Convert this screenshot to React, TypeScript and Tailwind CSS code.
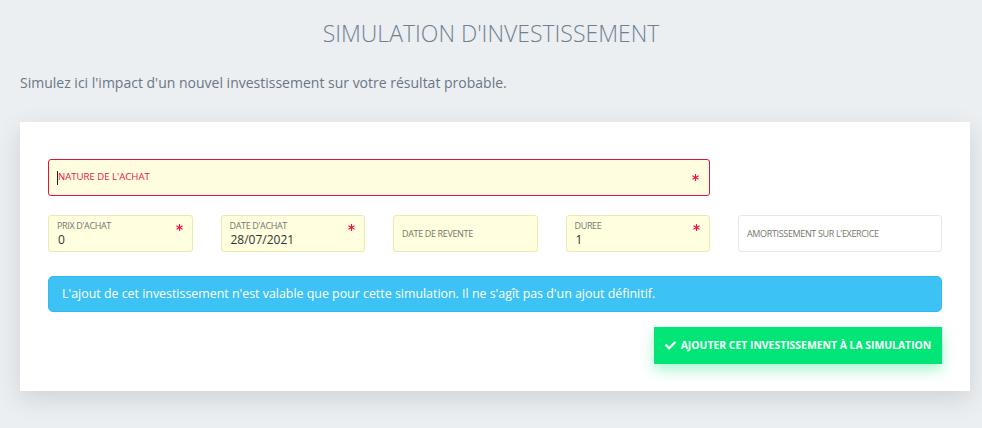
import React from 'react';
import { FaCheck, FaAsterisk } from 'react-icons/fa';

const font = { fontFamily: '"Open Sans", Lato, sans-serif' };

type FieldProps = {
  label: string;
  value?: string;
  required?: boolean;
  readOnly?: boolean;
};

const Star = ({ className }: { className: string }) => (
  <FaAsterisk className={`absolute w-[7px] h-[7px] text-[#f0124a] ${className}`} />
);

const Field: React.FC<FieldProps> = ({ label, value, required, readOnly }) => (
  <div
    className={`relative h-[37px] rounded-[3px] border px-[8px] flex flex-col justify-center ${
      readOnly ? 'bg-white border-[#e3e8ec]' : 'bg-[#fffedf] border-[#eee9ae]'
    }`}
  >
    <span className="text-[9px] tracking-[-0.35px] uppercase leading-[12px] text-[#77766a]">{label}</span>
    {value !== undefined && (
      <span className="text-[12px] leading-[15px] text-[#333] pl-[1px]">{value}</span>
    )}
    {required && <Star className="right-[9px] top-[8px]" />}
  </div>
);

export default function App() {
  return (
    <div className="min-h-[428px] w-full bg-[#eceff2] pt-[18px] pb-[36px]" style={font}>
      <h1 className="text-center text-[23px] font-light text-[#6f8190] leading-[30px]">
        SIMULATION D'INVESTISSEMENT
      </h1>
      <p className="mt-[26px] px-[20px] text-[14px] text-[#6b7683] leading-[18px]">
        Simulez ici l'impact d'un nouvel investissement sur votre résultat probable.
      </p>

      <div className="ml-[20px] mr-[12px] mt-[30px] bg-white px-[28px] pt-[37px] pb-[27px] shadow-[0_8px_24px_rgba(0,0,0,0.12)]">
        <div className="relative w-[662px] h-[37px] rounded-[3px] border border-[#e0123f] bg-[#fffde0] flex items-center px-[8px]">
          <span className="w-px h-[14px] bg-[#222]" />
          <span className="text-[9.6px] uppercase text-[#e8143f]">Nature de l'achat</span>
          <Star className="right-[10px] top-[14px]" />
        </div>

        <div className="mt-[19px] grid grid-cols-[repeat(4,144.5px)_1fr] gap-x-[28px]">
          <Field label="Prix d'achat" value="0" required />
          <Field label="Date d'achat" value="28/07/2021" required />
          <Field label="Date de revente" />
          <Field label="Duree" value="1" required />
          <Field label="Amortissement sur l'exercice" readOnly />
        </div>

        <div className="mt-[24px] h-[36px] rounded-[5px] border border-[#33b8f0] bg-[#3dc2f6] flex items-center px-[13px] text-[12.4px] text-white">
          L'ajout de cet investissement n'est valable que pour cette simulation. Il ne s'agît pas d'un ajout définitif.
        </div>

        <div className="mt-[15px] flex justify-end">
          <button className="h-[37px] w-[288px] bg-[#02e577] flex items-center justify-center gap-[5px] text-white text-[10.4px] font-bold uppercase shadow-[0_6px_14px_rgba(2,229,119,0.35)]">
            <FaCheck className="w-[11px] h-[11px]" />
            Ajouter cet investissement à la simulation
          </button>
        </div>
      </div>
    </div>
  );
}
